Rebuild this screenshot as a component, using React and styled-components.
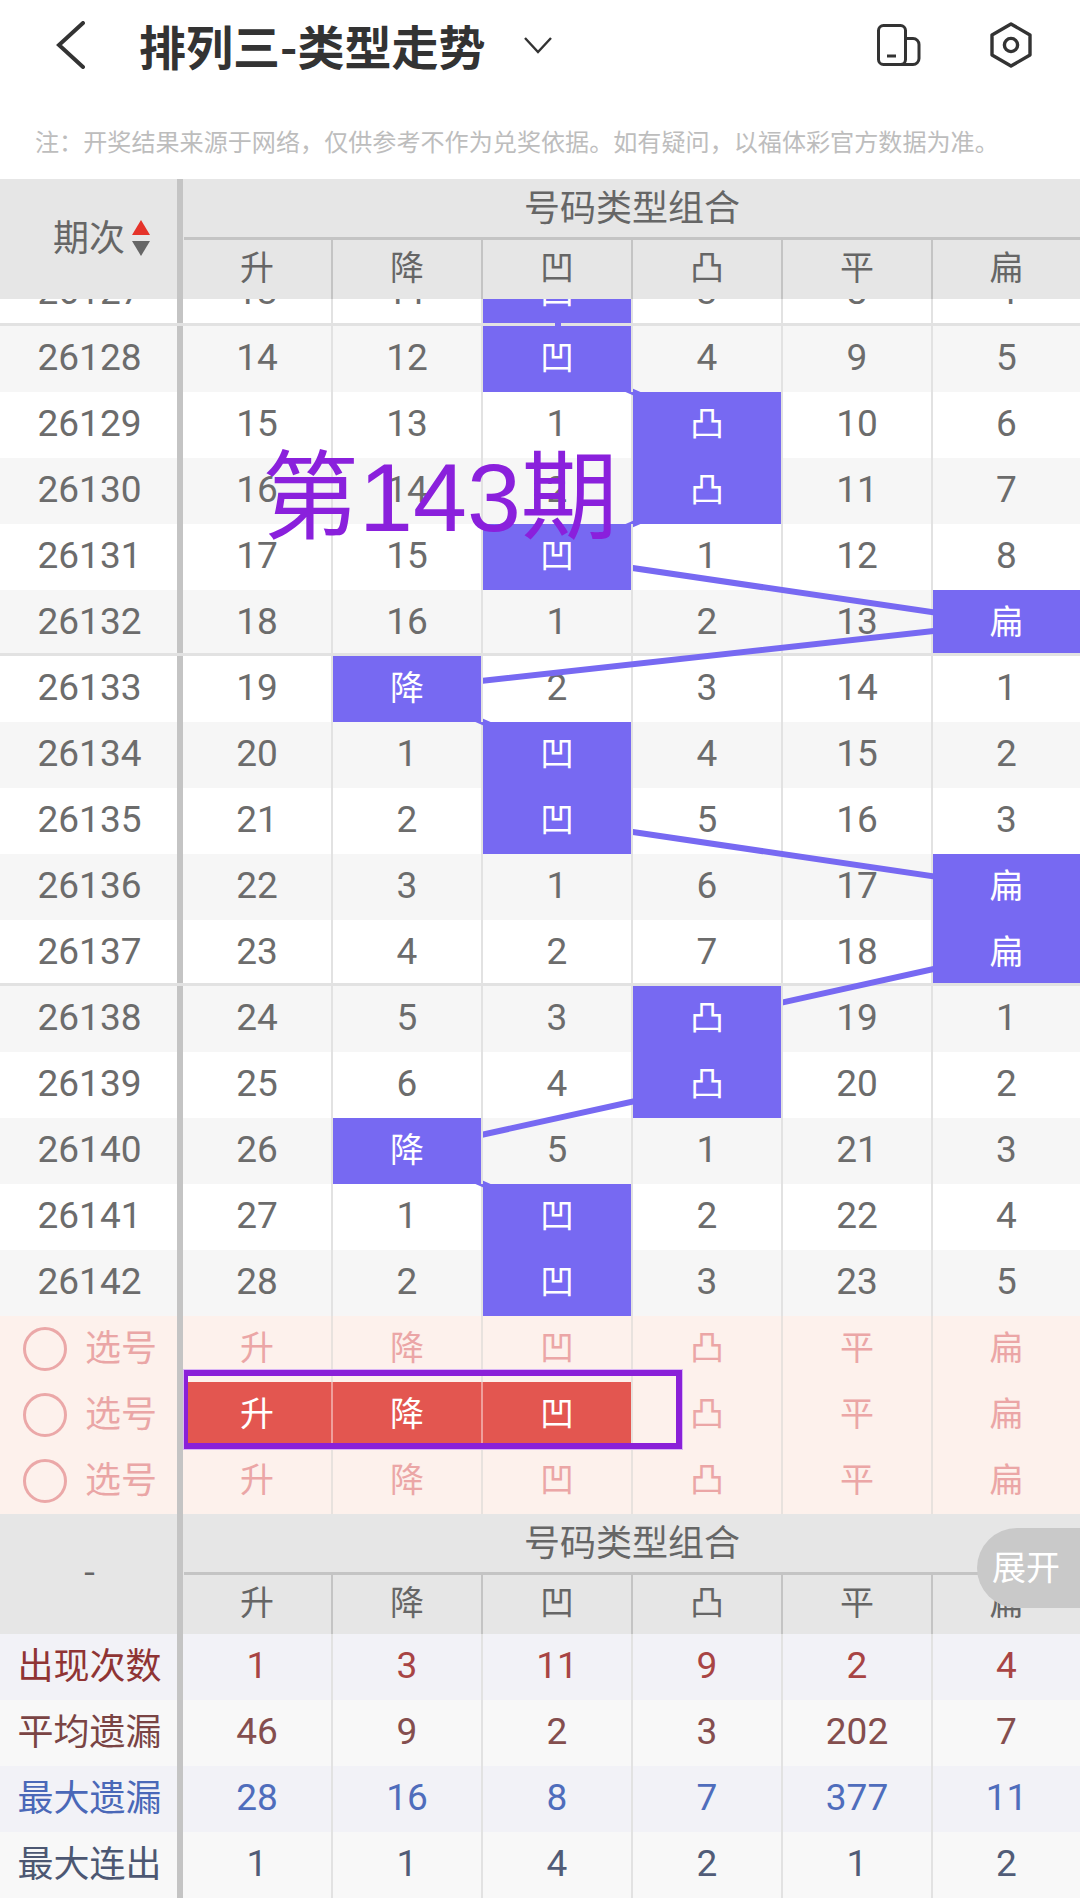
import React from "react";
import styled, { createGlobalStyle } from "styled-components";

const GlobalStyle = createGlobalStyle`
    html, body {
        margin: 0;
        padding: 0;
        background: #fff;
    }
    body {
        font-family: "Roboto", "Noto Sans CJK SC", sans-serif;
    }
`;

const COLUMNS = ["升", "降", "凹", "凸", "平", "扁"];
const COL_CENTERS = [258, 408, 558, 708, 858, 1006];
const ROW_HEIGHT = 66;
const ROWS_OFFSET = 39;
const NOTE_TEXT =
    "注\uFF1A开奖结果来源于网络\uFF0C仅供参考不作为兑奖依据。如有疑问\uFF0C以福体彩官方数据为准。";

// hit: index of the blue column, values: miss counts per column
const ROWS = [
    { id: 26127, hit: 2, values: [13, 11, 0, 3, 8, 4] },
    { id: 26128, hit: 2, values: [14, 12, 0, 4, 9, 5] },
    { id: 26129, hit: 3, values: [15, 13, 1, 0, 10, 6] },
    { id: 26130, hit: 3, values: [16, 14, 2, 0, 11, 7] },
    { id: 26131, hit: 2, values: [17, 15, 0, 1, 12, 8] },
    { id: 26132, hit: 5, values: [18, 16, 1, 2, 13, 0] },
    { id: 26133, hit: 1, values: [19, 0, 2, 3, 14, 1] },
    { id: 26134, hit: 2, values: [20, 1, 0, 4, 15, 2] },
    { id: 26135, hit: 2, values: [21, 2, 0, 5, 16, 3] },
    { id: 26136, hit: 5, values: [22, 3, 1, 6, 17, 0] },
    { id: 26137, hit: 5, values: [23, 4, 2, 7, 18, 0] },
    { id: 26138, hit: 3, values: [24, 5, 3, 0, 19, 1] },
    { id: 26139, hit: 3, values: [25, 6, 4, 0, 20, 2] },
    { id: 26140, hit: 1, values: [26, 0, 5, 1, 21, 3] },
    { id: 26141, hit: 2, values: [27, 1, 0, 2, 22, 4] },
    { id: 26142, hit: 2, values: [28, 2, 0, 3, 23, 5] },
];

const STATS = [
    { label: "出现次数", bg: "#f2f2f7", color: "#a84444", labelColor: "#8f3434", values: [1, 3, 11, 9, 2, 4] },
    { label: "平均遗漏", bg: "#f8f8f8", color: "#844e4e", labelColor: "#7a4444", values: [46, 9, 2, 3, 202, 7] },
    { label: "最大遗漏", bg: "#f2f2f7", color: "#4f6dbc", labelColor: "#4a68b8", values: [28, 16, 8, 7, 377, 11] },
    { label: "最大连出", bg: "#f8f8f8", color: "#515c77", labelColor: "#4c5772", values: [1, 1, 4, 2, 1, 2] },
];

const Page = styled.div`
    width: 1080px;
    height: 1898px;
    overflow: hidden;
    position: relative;
    background: #fff;
    color: #666;
`;

const TopBar = styled.div`
    height: 90px;
    display: flex;
    align-items: center;
    padding: 0 47px 0 55px;
`;

const Title = styled.div`
    margin-left: 54px;
    font-family: "Noto Sans CJK SC", sans-serif;
    font-size: 47px;
    font-weight: 700;
    color: #333;
    line-height: 90px;
    white-space: nowrap;
`;

const Caret = styled.svg`
    margin-left: 38px;
`;

const TopActions = styled.div`
    margin-left: auto;
    display: flex;
    align-items: center;
    gap: 68px;
`;

const Note = styled.div`
    height: 89px;
    padding: 33px 0 0 35px;
    box-sizing: border-box;
    font-family: "Noto Sans CJK SC", sans-serif;
    font-size: 24.1px;
    line-height: 36px;
    color: #bdbdbd;
    white-space: nowrap;
`;

const Line = styled.div`
    flex: none;
    display: grid;
    grid-template-columns: 183px repeat(5, 150px) 147px;
    height: ${ROW_HEIGHT}px;
    box-sizing: border-box;
    background: ${(p) => p.$bg || "transparent"};
    border-bottom: ${(p) => (p.$heavy ? "3px solid #e2e2e2" : "0")};
    && > * {
        ${(p) => (p.$heavy ? "padding-top: 4px;" : "")}
    }
`;

const Side = styled.div`
    display: flex;
    align-items: center;
    justify-content: center;
    box-sizing: border-box;
    border-right: 6px solid #c4c4c4;
    padding-bottom: 4px;
    padding-left: 2px;
    font-size: 37px;
    color: ${(p) => p.$color || "#6c6c6c"};
    white-space: nowrap;
`;

const SideLabel = styled(Side)`
    font-family: "Noto Sans CJK SC", sans-serif;
    font-size: 36px;
    padding-bottom: 8px;
`;

const Cell = styled.div`
    display: flex;
    align-items: center;
    justify-content: center;
    box-sizing: border-box;
    border-right: 2px solid #e2e2e2;
    padding-bottom: 4px;
    font-size: 37px;
    color: ${(p) => p.$color || "#6c6c6c"};
    &:last-child {
        border-right: 0;
    }
`;

const HitCell = styled(Cell)`
    position: relative;
    z-index: 2;
    background: #7769f2;
    background-clip: padding-box;
    color: #fff;
    font-family: "Noto Sans CJK SC", sans-serif;
    font-size: 34px;
    padding-bottom: 8px;
`;

const HeadBlock = styled.div`
    background: #e6e6e6;
    display: grid;
    grid-template-columns: 183px 1fr;
    height: 120px;
`;

const HeadSide = styled(SideLabel)`
    justify-content: ${(p) => (p.$end ? "flex-end" : "center")};
    padding-right: ${(p) => (p.$end ? 27 : 0)}px;
    padding-bottom: ${(p) => (p.$end ? 8 : 13)}px;
    gap: 7px;
    color: #666;
`;

const HeadRight = styled.div`
    display: flex;
    flex-direction: column;
`;

const GroupTitle = styled.div`
    height: 61px;
    box-sizing: border-box;
    margin-left: 1px;
    border-bottom: 3px solid #c4c4c4;
    padding-bottom: 6px;
    display: flex;
    align-items: center;
    justify-content: center;
    font-family: "Noto Sans CJK SC", sans-serif;
    font-size: 36px;
    color: #666;
`;

const SubHead = styled.div`
    flex: 1;
    display: grid;
    grid-template-columns: repeat(5, 150px) 147px;
`;

const SubCell = styled(Cell)`
    font-family: "Noto Sans CJK SC", sans-serif;
    font-size: 34px;
    padding-bottom: 8px;
    border-right: 2px solid #c4c4c4;
    color: #666;
`;

const SortIcon = styled.svg`
    margin-top: 6px;
`;

const Rows = styled.div`
    position: relative;
    height: 1017px;
    overflow: hidden;
    display: flex;
    flex-direction: column;
    justify-content: flex-end;
`;

const Trend = styled.svg`
    position: absolute;
    left: 0;
    top: 0;
    z-index: 1;
    pointer-events: none;
`;

const IssueStamp = styled.div`
    position: absolute;
    left: 262px;
    top: 443px;
    z-index: 4;
    font-family: "Liberation Sans", "Noto Sans CJK SC", sans-serif;
    font-size: 97px;
    line-height: 110px;
    color: #8a20dc;
    white-space: nowrap;
`;

const PickArea = styled.div`
    background: #fdf1ec;
`;

const PickSide = styled(SideLabel)`
    color: #eaa6a6;
    justify-content: flex-start;
    padding-left: 23px;
    gap: 18px;
`;

const Circle = styled.span`
    display: block;
    width: 44px;
    height: 44px;
    margin-top: 8px;
    box-sizing: border-box;
    border-radius: 50%;
    border: 3px solid #eba8a8;
`;

const PickCell = styled(SubCell)`
    color: ${(p) => (p.$on ? "#fff" : "#eba6a6")};
    background: ${(p) => (p.$on ? "#e35650" : "transparent")};
    background-clip: padding-box;
    border-right: 2px solid ${(p) => (p.$on ? "#ef9f9b" : "#e8e2de")};
    &:nth-child(4) {
        border-right-color: #e8e2de;
    }
`;

const Marker = styled.div`
    position: absolute;
    left: 184px;
    top: 1370px;
    width: 498px;
    height: 79px;
    box-sizing: border-box;
    border: 6px solid #8a20d8;
    border-left-width: 4px;
    box-shadow: 0 0 0 1px #d9b4f5;
    z-index: 4;
`;

const ExpandPill = styled.div`
    position: absolute;
    right: 0;
    top: 1528px;
    width: 103px;
    height: 80px;
    box-sizing: border-box;
    padding: 0 0 6px 15px;
    display: flex;
    align-items: center;
    background: #c9c9c9;
    border-radius: 40px 0 0 40px;
    color: #fff;
    font-family: "Noto Sans CJK SC", sans-serif;
    font-size: 34px;
    z-index: 5;
    white-space: nowrap;
`;

function BackIcon() {
    return (
        <svg width="30" height="48" viewBox="0 0 30 48" fill="none">
            <path d="M28 2 L4 24 L28 46" stroke="#333" strokeWidth="4" strokeLinecap="round" />
        </svg>
    );
}

function DeviceIcon() {
    return (
        <svg width="44" height="42" viewBox="0 0 44 42" fill="none" stroke="#333" strokeWidth="3">
            <rect x="1.5" y="1.5" width="27" height="39" rx="5" />
            <path d="M28.5 14.5 H36 a6 6 0 0 1 6 6 V34.5 a6 6 0 0 1 -6 6 H24" />
            <path d="M10 32 H19" />
        </svg>
    );
}

function NutIcon() {
    return (
        <svg width="44" height="46" viewBox="0 0 44 46" fill="none" stroke="#333" strokeWidth="3.4">
            <path d="M22 2 L41 13 V33 L22 44 L3 33 V13 Z" strokeLinejoin="round" />
            <circle cx="22" cy="23" r="6.6" />
        </svg>
    );
}

function Sort() {
    return (
        <SortIcon width="18" height="36" viewBox="0 0 18 36">
            <path d="M9 0 L18 15 H0 Z" fill="#e5332a" />
            <path d="M0 21 H18 L9 36 Z" fill="#666" />
        </SortIcon>
    );
}

function TableHead({ side, end }) {
    return (
        <HeadBlock>
            <HeadSide $end={end}>{side}</HeadSide>
            <HeadRight>
                <GroupTitle>号码类型组合</GroupTitle>
                <SubHead>
                    {COLUMNS.map((c) => (
                        <SubCell key={c}>{c}</SubCell>
                    ))}
                </SubHead>
            </HeadRight>
        </HeadBlock>
    );
}

export default function App() {
    const points = ROWS.map((r, i) => ({
        x: COL_CENTERS[r.hit],
        y: i * ROW_HEIGHT - ROWS_OFFSET + ROW_HEIGHT / 2,
    }));
    return (
        <Page>
            <GlobalStyle />
            <TopBar>
                <BackIcon />
                <Title>排列三-类型走势</Title>
                <Caret width="30" height="18" viewBox="0 0 30 18" fill="none">
                    <path d="M2 2 L15 16 L28 2" stroke="#333" strokeWidth="2.4" />
                </Caret>
                <TopActions>
                    <DeviceIcon />
                    <NutIcon />
                </TopActions>
            </TopBar>
            <Note>{NOTE_TEXT}</Note>

            <TableHead
                end
                side={
                    <>
                        期次
                        <Sort />
                    </>
                }
            />

            <Rows>
                <Trend width="1080" height="1017" viewBox="0 0 1080 1017">
                    <polyline
                        points={points.map((p) => `${p.x},${p.y}`).join(" ")}
                        fill="none"
                        stroke="#7769f2"
                        strokeWidth="6"
                    />
                </Trend>
                {ROWS.map((r, i) => (
                    <Line
                        key={r.id}
                        $bg={i % 2 === 1 ? "#f6f6f6" : "#fff"}
                        $heavy={i % 5 === 0 && i < 15}
                    >
                        <Side>{r.id}</Side>
                        {r.values.map((v, c) =>
                            c === r.hit ? (
                                <HitCell key={c}>{COLUMNS[c]}</HitCell>
                            ) : (
                                <Cell key={c}>{v}</Cell>
                            )
                        )}
                    </Line>
                ))}
            </Rows>

            <PickArea>
                {[0, 1, 2].map((row) => (
                    <Line key={row}>
                        <PickSide>
                            <Circle />
                            选号
                        </PickSide>
                        {COLUMNS.map((c, idx) => (
                            <PickCell key={c} $on={row === 1 && idx < 3}>{c}</PickCell>
                        ))}
                    </Line>
                ))}
            </PickArea>

            <TableHead side="-" />

            {STATS.map((s) => (
                <Line key={s.label} $bg={s.bg}>
                    <SideLabel $color={s.labelColor}>{s.label}</SideLabel>
                    {s.values.map((v, c) => (
                        <Cell key={c} $color={s.color}>{v}</Cell>
                    ))}
                </Line>
            ))}

            <IssueStamp>第143期</IssueStamp>
            <Marker />
            <ExpandPill>展开</ExpandPill>
        </Page>
    );
}
